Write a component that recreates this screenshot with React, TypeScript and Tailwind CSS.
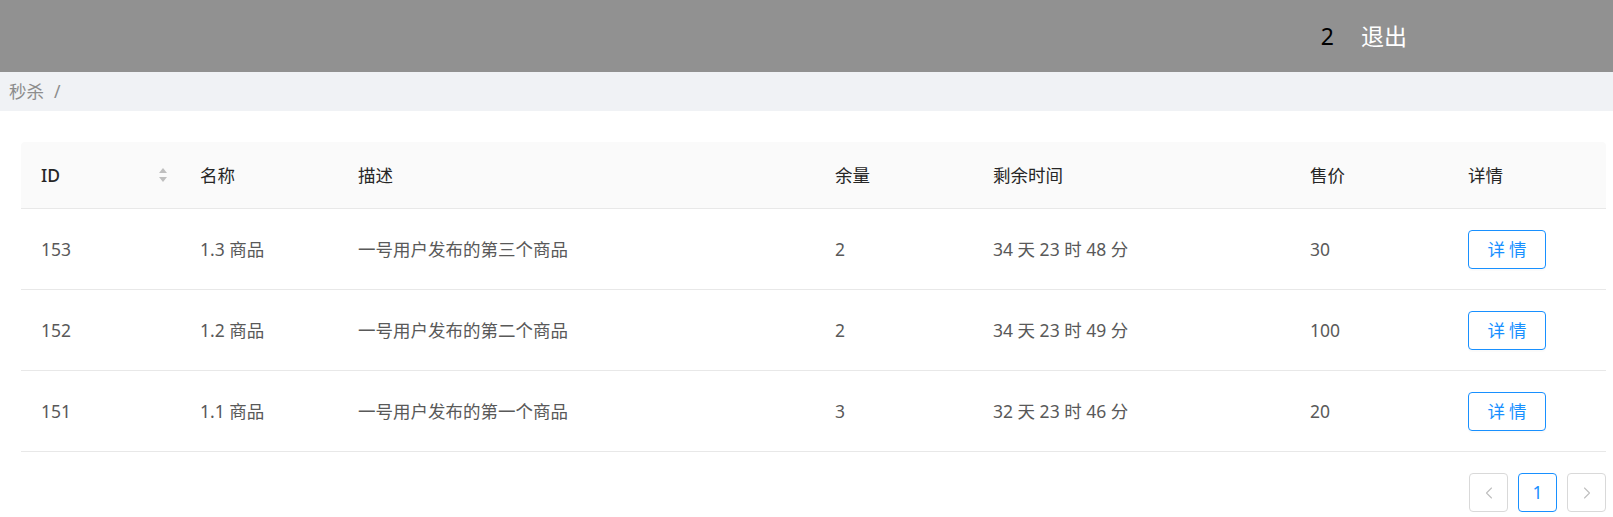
import { ChevronLeft, ChevronRight } from "lucide-react";

const rows = [
  { id: 153, name: "1.3 商品", desc: "一号用户发布的第三个商品", left: 2, time: "34 天 23 时 48 分", price: 30 },
  { id: 152, name: "1.2 商品", desc: "一号用户发布的第二个商品", left: 2, time: "34 天 23 时 49 分", price: 100 },
  { id: 151, name: "1.1 商品", desc: "一号用户发布的第一个商品", left: 3, time: "32 天 23 时 46 分", price: 20 },
];

const cols = "grid grid-cols-[159px_158px_477px_158px_317px_158px_158px]";

function SortIcon() {
  return (
    <svg width="10" height="16" viewBox="0 0 10 16" className="ml-auto">
      <path d="M5 1 L9 6 L1 6 Z" fill="#bfbfbf" />
      <path d="M5 15 L9 10 L1 10 Z" fill="#bfbfbf" />
    </svg>
  );
}

export default function App() {
  return (
    <div
      className="w-[1613px] h-[517px] bg-white overflow-hidden"
      style={{ fontFamily: '"Noto Sans", "Noto Sans CJK SC", sans-serif' }}
    >
      {/* top bar */}
      <div className="h-[72px] bg-[#919191] flex items-center justify-end pr-[206px] text-[23px]">
        <span className="text-black">2</span>
        <span className="text-white ml-[27px]">退出</span>
      </div>

      {/* breadcrumb */}
      <div className="h-[39px] bg-[#f0f2f5] flex items-center pl-[9px] text-[17.5px] text-[#8c8c8c]">
        <span>秒杀</span>
        <span className="ml-[10px]">/</span>
      </div>

      <div className="pl-[21px] pr-[7px] pt-[31px]">
        {/* table head */}
        <div className={`${cols} h-[67px] bg-[#fafafa] rounded-t-[4px] border-b border-[#e8e8e8] text-[17.5px] text-[#262626]`}>
          <div className="flex items-center pl-[20px] pr-[12px]">
            <span className="font-medium">ID</span>
            <SortIcon />
          </div>
          <div className="flex items-center pl-[20px]">名称</div>
          <div className="flex items-center pl-[20px]">描述</div>
          <div className="flex items-center pl-[20px]">余量</div>
          <div className="flex items-center pl-[20px]">剩余时间</div>
          <div className="flex items-center pl-[20px]">售价</div>
          <div className="flex items-center pl-[20px]">详情</div>
        </div>

        {/* rows */}
        {rows.map((r) => (
          <div
            key={r.id}
            className={`${cols} h-[80px] box-content border-b border-[#e8e8e8] text-[17.5px] text-[#595959]`}
          >
            <div className="flex items-center pl-[20px]">{r.id}</div>
            <div className="flex items-center pl-[20px]">{r.name}</div>
            <div className="flex items-center pl-[20px]">{r.desc}</div>
            <div className="flex items-center pl-[20px]">{r.left}</div>
            <div className="flex items-center pl-[20px]">{r.time}</div>
            <div className="flex items-center pl-[20px]">{r.price}</div>
            <div className="flex items-center pl-[20px]">
              <button className="w-[78px] h-[39px] rounded-[4px] border border-[#1890ff] text-[#1890ff] text-[17.5px] bg-white shadow-[0_2px_0_rgba(0,0,0,0.015)] tracking-[4px] pl-[4px]">
                详情
              </button>
            </div>
          </div>
        ))}

        {/* pagination */}
        <div className="flex justify-end gap-[10px] mt-[21px]">
          <div className="w-[39px] h-[39px] rounded-[4px] border border-[#d9d9d9] flex items-center justify-center text-[#bfbfbf]">
            <ChevronLeft size={20} strokeWidth={1.3} />
          </div>
          <div className="w-[39px] h-[39px] rounded-[4px] border border-[#1890ff] flex items-center justify-center text-[#1890ff] text-[17.5px]">
            1
          </div>
          <div className="w-[39px] h-[39px] rounded-[4px] border border-[#d9d9d9] flex items-center justify-center text-[#bfbfbf]">
            <ChevronRight size={20} strokeWidth={1.3} />
          </div>
        </div>
      </div>
    </div>
  );
}
